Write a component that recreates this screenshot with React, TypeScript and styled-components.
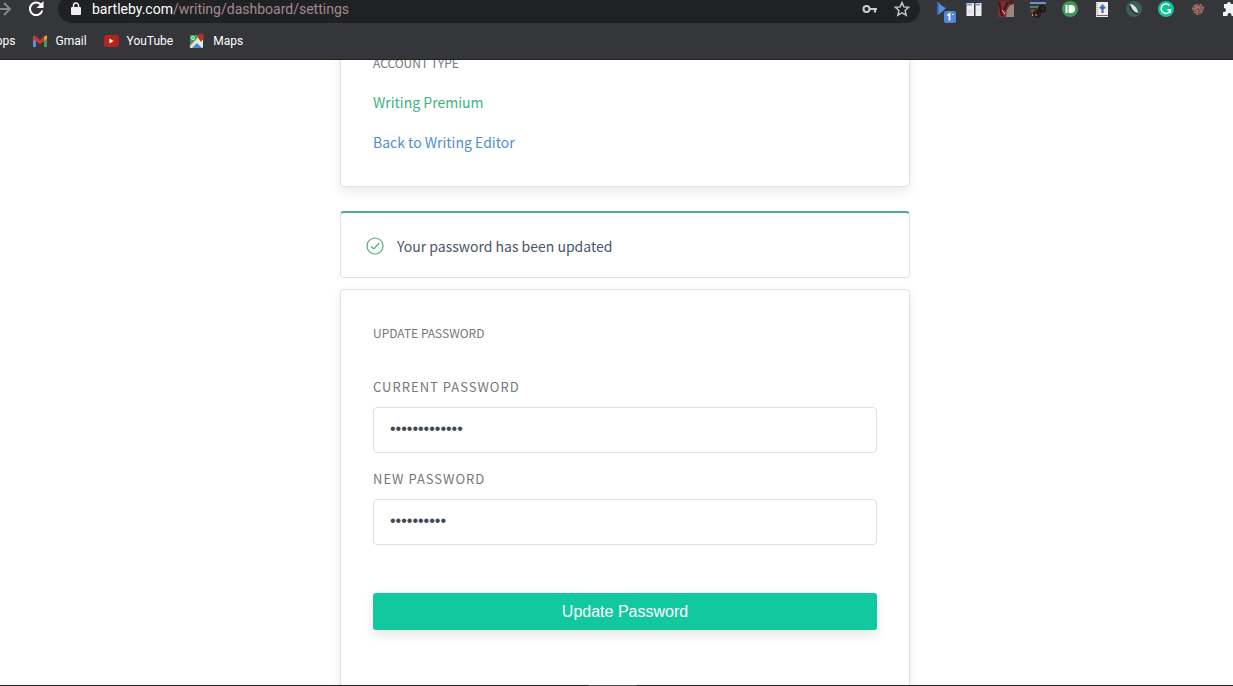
import React from "react";
import styled, { createGlobalStyle } from "styled-components";

const sans = `"Noto Sans CJK SC", "Noto Sans", sans-serif`;
const chrome = `Roboto, "Noto Sans", sans-serif`;

const GlobalStyle = createGlobalStyle`
  *, *::before, *::after { box-sizing: border-box; }
  body { margin: 0; background: #fff; overflow: hidden; }
`;

const Window = styled.div`
  display: flex;
  flex-direction: column;
  height: 100vh;
  overflow: hidden;
  font-family: ${sans};
`;

const BrowserBar = styled.header`
  flex: none;
  background: #35363a;
  border-bottom: 1px solid #202124;
  color: #fff;
  font-family: ${chrome};
  overflow: hidden;
`;

const Toolbar = styled.div`
  display: flex;
  align-items: center;
  height: 28px;
  margin: -5px -5px 0 -5px;
`;

const ToolButton = styled.button`
  display: flex;
  flex: none;
  padding: 0;
  border: 0;
  background: none;
  color: ${(p) => p.color || "#fff"};
`;

const NavGroup = styled.div`
  display: flex;
  gap: 17px;
  padding-right: 14px;
`;

const AddressBar = styled.div`
  display: flex;
  flex: 1;
  align-items: center;
  gap: 8px;
  min-width: 0;
  height: 28px;
  padding: 0 10px;
  border-radius: 14px;
  background: #202124;
`;

const Url = styled.a`
  flex: 1;
  color: #a08c8e;
  font-size: 14px;
  line-height: 20px;
  text-decoration: none;
  white-space: nowrap;
  strong { color: #fff; font-weight: 400; }
`;

const AddressActions = styled.div`
  display: flex;
  gap: 16px;
`;

const Extensions = styled.div`
  display: flex;
  flex: none;
  gap: 16px;
  padding-left: 14px;
`;

const Bookmarks = styled.nav`
  display: flex;
  align-items: center;
  gap: 16px;
  height: 36px;
  margin-left: -12px;
`;

const Bookmark = styled.a`
  display: flex;
  align-items: center;
  gap: 8px;
  color: #fff;
  font-size: 12px;
  line-height: 16px;
  text-decoration: none;
`;

const Page = styled.main`
  display: flex;
  flex: 1;
  justify-content: center;
  min-height: 0;
  padding-left: 17px;
  overflow: hidden;
`;

const Column = styled.div`
  flex: 0 1 570px;
  margin-top: -33px;
`;

const Card = styled.section`
  padding: 24px 32px 32px;
  border: 1px solid #dfe2e4;
  border-radius: 4px;
  background: #fff;
  box-shadow: 0 5px 12px rgba(0, 0, 0, 0.08);
`;

const PasswordCard = styled(Card)`
  min-height: 480px;
  padding-top: 32px;
`;

const Heading = styled.h2`
  margin: 0;
  color: #777;
  font-size: 12px;
  font-weight: 400;
  line-height: 22px;
  text-transform: uppercase;
`;

const CardLink = styled.a<{ $tone: string }>`
  display: block;
  margin-top: 16px;
  color: ${(p) => p.$tone};
  font-size: 14px;
  line-height: 24px;
  text-decoration: none;
`;

const Notice = styled.div`
  display: flex;
  align-items: center;
  gap: 13px;
  height: 67px;
  margin: 24px 0 11px;
  padding: 1px 24px 0 25px;
  border: 1px solid #dfe2e4;
  border-top: 2px solid #4dae82;
  border-radius: 4px;
  background: #fff;
  color: #4a5568;
  font-size: 14px;
  line-height: 24px;
`;

const Form = styled.form`
  display: flex;
  flex-direction: column;
  margin-top: 31px;
`;

const Label = styled.label`
  color: #777;
  font-size: 13px;
  line-height: 24px;
  letter-spacing: 1px;
  text-transform: uppercase;
`;

const Field = styled.input`
  width: 100%;
  height: 46px;
  margin: 8px 0 14px;
  padding: 0 16px 2px;
  border: 1px solid #dde1e3;
  border-radius: 4px;
  outline: 0;
  background: #fff;
  color: #3d4852;
  font: 16px "Liberation Sans", Arial, sans-serif;
`;

const Submit = styled.button`
  height: 37px;
  margin-top: 34px;
  padding: 0;
  border: 0;
  border-radius: 3px;
  background: #12c99f;
  box-shadow: 0 5px 12px rgba(0, 0, 0, 0.1);
  color: #fff;
  font: 16px "Liberation Sans", Arial, sans-serif;
`;

const Taskbar = styled.footer`
  flex: none;
  height: 1px;
  background: linear-gradient(90deg, #202124 589px, #4a4d55 589px, #4a4d55 637px, #202124 637px);
`;

const Icon = ({ children, size = 16, box = "0 0 16 16" }: { children: React.ReactNode; size?: number; box?: string }) => (
  <svg width={size} height={size} viewBox={box} fill="none" overflow="visible" aria-hidden="true">
    {children}
  </svg>
);

const extensions: { name: string; art: React.ReactNode }[] = [
  {
    name: "Translate",
    art: (
      <>
        <path d="M4 1l4 4 4 2-3 3-5 4z" fill="#5a8fd8" />
        <path d="M4 1v13" stroke="#3c6db4" strokeWidth="2" />
        <path d="M3 3v10" stroke="#29456f" strokeDasharray="1 1" />
        <rect x="10" y="10" width="12" height="12" rx="2" fill="#5087dc" />
        <path d="M13.500 14.500l2-1.500v6.500" stroke="#fff" strokeWidth="1.800" />
        <path d="M18 13.500h1.500" stroke="#fff" />
      </>
    ),
  },
  {
    name: "Tabs",
    art: (
      <>
        <rect x="0.500" y="2" width="7.500" height="13" fill="#eceef0" />
        <rect x="9.500" y="2" width="6" height="13" fill="#eceef0" />
        <path d="M1 3.500h5M10 3.500h4" stroke="#6e9fd0" strokeWidth="2" />
        <path d="M2 9h4M11 9h3M2 11h4" stroke="#d2d5d8" />
      </>
    ),
  },
  {
    name: "Reader",
    art: (
      <>
        <rect width="16" height="16" fill="#86282e" />
        <path d="M16 2v14H8l1-7 3-5z" fill="#9a8680" />
        <path d="M1 1l3 14M10 1L6 9" stroke="#341c20" strokeWidth="2" />
        <path d="M10 0h6v3l-4 1z" fill="#4b2529" />
        <path d="M4 9l3 4" stroke="#e0c8c4" />
      </>
    ),
  },
  {
    name: "Research",
    art: (
      <>
        <path d="M0 2h16" stroke="#6c92d0" strokeWidth="2" />
        <path d="M0 6h9" stroke="#3e8a59" strokeWidth="2" />
        <path d="M1 10h5" stroke="#8b4a44" strokeWidth="3" />
        <path d="M2 14h5" stroke="#b59a80" strokeWidth="2" />
        <path d="M6 13l6-5" stroke="#211919" strokeWidth="3" />
        <circle cx="12" cy="8" r="3" stroke="#211919" strokeWidth="2" />
        <circle cx="7" cy="13" r="3" stroke="#2a1c1c" strokeWidth="2" />
      </>
    ),
  },
  {
    name: "Pushbullet",
    art: (
      <>
        <circle cx="8" cy="8" r="8" fill="#3c9a56" />
        <path d="M4.500 4v8" stroke="#fff" strokeWidth="2" />
        <path d="M6.500 4H9a4 4 0 010 8H6.500z" fill="#fff" />
      </>
    ),
  },
  {
    name: "Scholar",
    art: (
      <>
        <rect x="2" y="1" width="12" height="15" fill="#eceeee" />
        <path d="M3 2v13" stroke="#9b6f68" strokeDasharray="1 1" />
        <path d="M8.500 3l3.500 4-2 1H7L5 7z" fill="#4f76b8" />
        <path d="M8.500 6v6" stroke="#3c5c95" strokeWidth="2" />
        <path d="M3 14.500h11" stroke="#8e5c58" />
      </>
    ),
  },
  {
    name: "Quill",
    art: (
      <>
        <circle cx="8" cy="8" r="8" fill="#3c5f56" />
        <path d="M4 3c3 0 7 3 8 8l-1 1C7 11 5 7 4 3z" fill="#dce2df" />
        <path d="M4 5c1 4 4 7 8 8" stroke="#26342f" strokeWidth="1.500" />
      </>
    ),
  },
  {
    name: "Grammarly",
    art: (
      <>
        <circle cx="8" cy="8" r="8" fill="#15c39a" />
        <path d="M11.500 4.500A4.800 4.800 0 1012.500 9H9.500M12.500 9l-.5 3" stroke="#fff" strokeWidth="1.400" />
      </>
    ),
  },
  {
    name: "Web clipper",
    art: (
      <>
        <path d="M3 5l3-2 3 1 3-1 2 4-1 4-4 3-4-1-3-4z" fill="#7b5653" />
        <path d="M2 7l10 5M4 4l8 7M7 3v11M11 3l-7 9M14 7H4" stroke="#b49a96" strokeDasharray="1 1" />
        <path d="M5 10l3-3 2 5" stroke="#a33c37" />
      </>
    ),
  },
  {
    name: "Extensions",
    art: (
      <path
        d="M2 3h3a2 2 0 014 0h5v4h1a2 2 0 010 4h-1v4H9.500v-1a2 2 0 00-4 0v1H1v-4h1a2 2 0 000-4H2z"
        fill="#f4f5f5"
      />
    ),
  },
];

const bookmarks: { name: string; href: string; art?: React.ReactNode }[] = [
  { name: "Apps", href: "#apps" },
  {
    name: "Gmail",
    href: "#gmail",
    art: (
      <>
        <path d="M1 5v9h3V7z" fill="#5b8fe0" />
        <path d="M12 7v7h3V5z" fill="#3f9a5c" />
        <path d="M1 3l2-.5L8 7l5-4.500 2 .5v3l-7 5-7-5z" fill="#c5392f" />
        <path d="M12 4l2-1.500 1 .5v3l-3 2z" fill="#d9a23a" />
      </>
    ),
  },
  {
    name: "YouTube",
    href: "#youtube",
    art: (
      <>
        <rect x="1" y="2" width="15" height="12" rx="3" fill="#b3261e" />
        <path d="M6.500 5.500l4 2.500-4 2.500z" fill="#fff" />
      </>
    ),
  },
  {
    name: "Maps",
    href: "#maps",
    art: (
      <>
        <rect x="1" y="2" width="13" height="13" rx="1" fill="#e6ebe8" />
        <path d="M1 2h10L1 13z" fill="#3c9a5c" />
        <path d="M3 15l5-5 5 5z" fill="#4d83d6" />
        <path d="M1 14L12 3" stroke="#e9d9a0" strokeWidth="1.500" />
        <circle cx="4" cy="5" r="1.500" stroke="#dff0e4" />
        <path d="M12 9C10 6 9 5 9 3.500a3 3 0 016 0C15 5 14 6 12 9z" fill="#b3302a" />
      </>
    ),
  },
];

export default function App() {
  return (
    <Window>
      <GlobalStyle />
      <BrowserBar>
        <Toolbar>
          <NavGroup>
            <ToolButton type="button" color="#85868a" aria-label="Forward">
              <Icon>
                <path d="M1 8h14M9 2l6 6-6 6" stroke="currentColor" strokeWidth="2" />
              </Icon>
            </ToolButton>
            <ToolButton type="button" aria-label="Reload">
              <Icon>
                <path d="M13.500 4.300A6.300 6.300 0 1014.300 9.500" stroke="currentColor" strokeWidth="2" />
                <path d="M15.500 0v7h-7z" fill="currentColor" />
              </Icon>
            </ToolButton>
          </NavGroup>
          <AddressBar>
            <Icon>
              <rect x="3" y="6" width="10" height="8" rx="1" fill="#eee" />
              <path d="M5.500 7V4.500a2.500 2.500 0 015 0V7" stroke="#eee" strokeWidth="1.500" />
            </Icon>
            <Url href="#settings">
              <strong>bartleby.com</strong>/writing/dashboard/settings
            </Url>
            <AddressActions>
              <ToolButton type="button" color="#c3d0cc" aria-label="Saved passwords">
                <Icon>
                  <circle cx="4.500" cy="8" r="3" stroke="currentColor" strokeWidth="2" />
                  <path d="M8 8h7M13 8v3.500" stroke="currentColor" strokeWidth="2.200" />
                </Icon>
              </ToolButton>
              <ToolButton type="button" color="#c3d0cc" aria-label="Bookmark this page">
                <Icon>
                  <path
                    d="M8 1.500l1.900 4.400 4.800.4-3.600 3.200 1.100 4.700L8 11.700l-4.200 2.500 1.100-4.700-3.600-3.200 4.800-.4z"
                    stroke="currentColor"
                    strokeWidth="1.400"
                  />
                </Icon>
              </ToolButton>
            </AddressActions>
          </AddressBar>
          <Extensions>
            {extensions.map((e) => (
              <ToolButton key={e.name} type="button" aria-label={e.name}>
                <Icon>{e.art}</Icon>
              </ToolButton>
            ))}
          </Extensions>
        </Toolbar>
        <Bookmarks aria-label="Bookmarks">
          {bookmarks.map((b) => (
            <Bookmark key={b.name} href={b.href}>
              {b.art && <Icon>{b.art}</Icon>}
              {b.name}
            </Bookmark>
          ))}
        </Bookmarks>
      </BrowserBar>
      <Page>
        <Column>
          <Card>
            <Heading>Account Type</Heading>
            <CardLink href="#premium" $tone="#3db37f">
              Writing Premium
            </CardLink>
            <CardLink href="#editor" $tone="#4f8fd0">
              Back to Writing Editor
            </CardLink>
          </Card>
          <Notice role="status">
            <Icon size={18} box="0 0 18 18">
              <circle cx="9" cy="9" r="8" stroke="#4dae82" strokeWidth="1.200" />
              <path d="M5 9.500l3 2.500 5-6" stroke="#4dae82" strokeWidth="1.200" />
            </Icon>
            Your password has been updated
          </Notice>
          <PasswordCard>
            <Heading>Update Password</Heading>
            <Form onSubmit={(e) => e.preventDefault()}>
              <Label htmlFor="current-password">Current Password</Label>
              <Field id="current-password" type="password" defaultValue="abcdefghijklm" />
              <Label htmlFor="new-password">New Password</Label>
              <Field id="new-password" type="password" defaultValue="abcdefghij" />
              <Submit type="submit">Update Password</Submit>
            </Form>
          </PasswordCard>
        </Column>
      </Page>
      <Taskbar />
    </Window>
  );
}
